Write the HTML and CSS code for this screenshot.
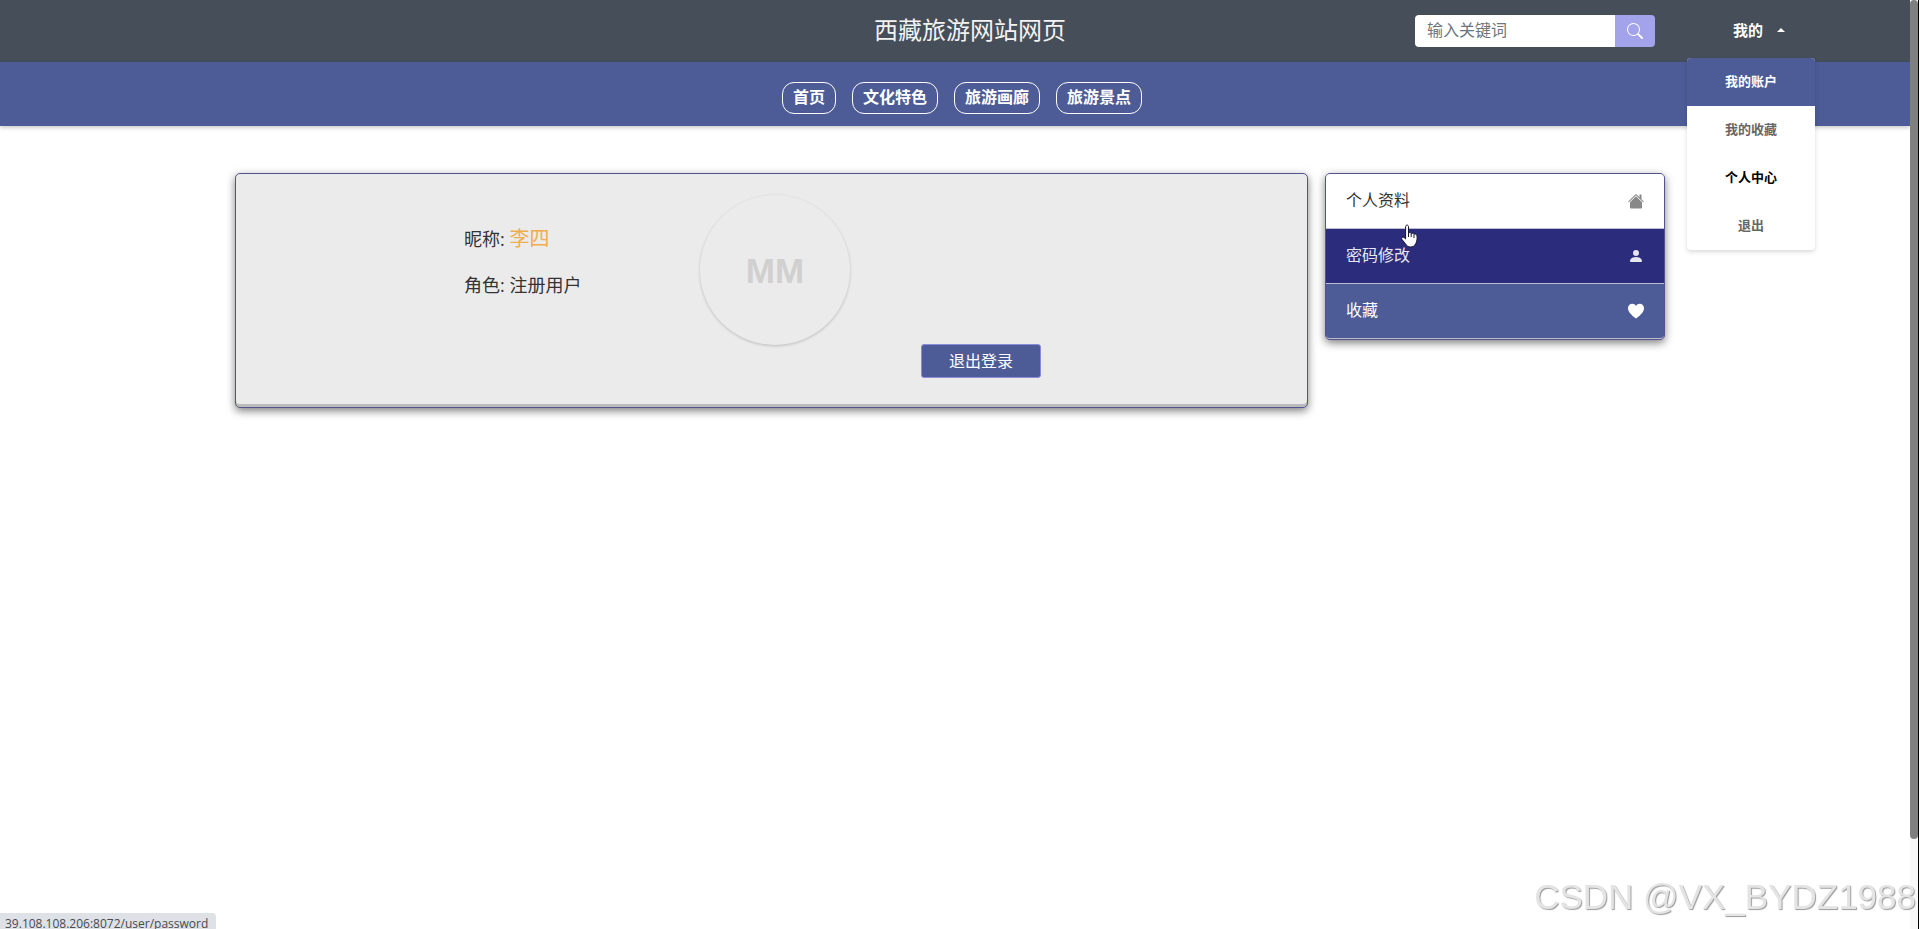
FILE: index.html
```html
<!DOCTYPE html>
<html lang="zh-CN">
<head>
  <meta charset="UTF-8" />
  <meta name="viewport" content="width=device-width, initial-scale=1.0"/>
  <title>西藏旅游网站网页</title>
  <link rel="stylesheet" href="styles.css">
</head>
<body>
  <header class="top">
    <h1 class="title">西藏旅游网站网页</h1>
    <div class="tools">
      <form class="search">
        <input type="text" placeholder="输入关键词" aria-label="输入关键词">
        <button type="button" aria-label="搜索">
          <svg width="16" height="16" viewBox="0 0 16 16" fill="currentColor"><path d="M11.742 10.344a6.5 6.5 0 1 0-1.397 1.398h-.001q.044.06.098.115l3.85 3.85a1 1 0 0 0 1.415-1.414l-3.85-3.85a1 1 0 0 0-.115-.1zM12 6.5a5.5 5.5 0 1 1-11 0 5.5 5.5 0 0 1 11 0"/></svg>
        </button>
      </form>
      <div class="user">
        <button type="button" class="user-toggle">我的 <span class="caret"></span></button>
        <div class="menu">
          <a href="#" class="active">我的账户</a>
          <a href="#">我的收藏</a>
          <a href="#" class="current">个人中心</a>
          <a href="#">退出</a>
        </div>
      </div>
    </div>
  </header>

  <nav class="nav">
    <a href="#">首页</a>
    <a href="#">文化特色</a>
    <a href="#">旅游画廊</a>
    <a href="#">旅游景点</a>
  </nav>

  <main class="content">
    <section class="card">
      <div class="info">
        <p>昵称: <span class="nickname">李四</span></p>
        <p>角色: <span>注册用户</span></p>
      </div>
      <div class="avatar">MM</div>
      <button type="button" class="logout">退出登录</button>
    </section>

    <aside class="side">
      <a href="#" class="side-profile">
        <span>个人资料</span>
        <svg width="16" height="16" viewBox="0 0 16 16" fill="currentColor"><path d="M8 3.300l6 6V14.500a1 1 0 0 1-1 1H3a1 1 0 0 1-1-1V9.300z"/><path d="M7.300 1.500a1 1 0 0 1 1.400 0L11.500 4.300V1.500h2v4.800l2.300 2.300-.7.700L8 2.200.9 9.300l-.7-.7z"/></svg>
      </a>
      <a href="#" class="side-password">
        <span>密码修改</span>
        <svg width="16" height="16" viewBox="0 0 16 16" fill="currentColor"><path d="M3 14s-1 0-1-1 1-4 6-4 6 3 6 4-1 1-1 1zm5-6a3 3 0 1 0 0-6 3 3 0 0 0 0 6"/></svg>
        <svg class="pointer" width="18" height="25" viewBox="0 0 18 25"><path d="M5 1.500C6 .6 7.500 1.200 7.500 2.700V9c.8-.8 2.200-.5 2.700.6.900-.7 2.300-.4 2.700.8 1-.7 2.900-.2 3.100 1.400.4 3-.1 5.600-1.200 7.700-1.300 2.600-3 3.500-5.300 3.500-2.500 0-4-1.400-5.200-3.400L1 15.500c-1-1.700.5-3.200 2-2.100l1.600 1.500V2.600z" fill="#fff" stroke="#16162e"/><path d="M7.500 9v4M10.200 10v3M13 11v3" stroke="#16162e"/></svg>
      </a>
      <a href="#" class="side-favorite">
        <span>收藏</span>
        <svg width="16" height="16" viewBox="0 0 16 16" fill="currentColor"><path d="M8 15.500C5.500 13.800 0 9.700 0 5.300 0 2.500 2 .8 4.200.8 5.900.8 7.200 1.700 8 3 8.800 1.700 10.100.8 11.800.8 14 .8 16 2.500 16 5.300c0 4.400-5.500 8.500-8 10.200z"/></svg>
      </a>
    </aside>
  </main>

  <div class="status">39.108.108.206:8072/user/password</div>
  <div class="scrollbar"><div class="thumb"></div></div>
  <div class="watermark">CSDN @VX_BYDZ1988</div>
</body>
</html>
```

FILE: styles.css
```css
* {
  margin: 0;
  padding: 0;
  box-sizing: border-box;
}
html, body {
  height: 100%;
  overflow: hidden;
}
body {
  padding-right: 9px;
  background: #fff;
  color: #333;
  font-family: "Open Sans", "Noto Sans CJK SC", sans-serif;
  font-size: 16px;
  line-height: 24px;
}
a {
  color: inherit;
  text-decoration: none;
}
button, input {
  font: inherit;
  border: none;
}
button {
  cursor: pointer;
}

.top {
  display: grid;
  grid-template-columns: 1fr auto 1fr;
  align-items: center;
  height: 62px;
  padding: 0 95px 0 125px;
  background: #454e59;
  color: #fff;
}
.title {
  grid-column: 2;
  padding-bottom: 2px;
  font-size: 24px;
  font-weight: 400;
  line-height: 32px;
  color: #f2f2f2;
}
.tools {
  display: flex;
  justify-content: flex-end;
  align-items: center;
  gap: 32px;
}
.search {
  display: flex;
  width: 240px;
  height: 32px;
  border-radius: 4px;
  overflow: hidden;
}
.search input {
  flex: 1;
  min-width: 0;
  padding: 0 12px 2px;
  background: #fff;
}
.search input::placeholder {
  color: #6c757d;
}
.search button {
  display: flex;
  align-items: center;
  justify-content: center;
  width: 40px;
  background: #a3a3eb;
  color: #fff;
}

.user {
  position: relative;
  width: 128px;
}
.user-toggle {
  display: flex;
  align-items: center;
  justify-content: space-between;
  width: 100%;
  padding: 0 30px 2px 46px;
  background: none;
  color: #fff;
  font-size: 15px;
  font-weight: 700;
}
.caret {
  border: 4px solid transparent;
  border-top: 0;
  border-bottom-color: #fff;
}
.menu {
  position: absolute;
  top: 40px;
  left: 0;
  z-index: 10;
  width: 100%;
  background: #fff;
  border-radius: 4px;
  box-shadow: 0 2px 4px rgba(0,0,0,0.15);
  overflow: hidden;
}
.menu a {
  display: block;
  padding-bottom: 2px;
  color: #666;
  font-size: 13px;
  font-weight: 700;
  line-height: 46px;
  text-align: center;
}
.menu .active {
  background: #4d5c97;
  color: #fff;
}
.menu .current {
  color: #000;
}

.nav {
  display: flex;
  align-items: center;
  justify-content: center;
  gap: 16px;
  height: 64px;
  padding: 8px 0 0 14px;
  background: #4d5c97;
  box-shadow: 0 2px 4px rgba(0,0,0,0.2);
}
.nav a {
  padding: 2px 10px 4px;
  border: 1px solid #fff;
  border-radius: 12px;
  color: #fff;
  font-weight: 700;
}

.content {
  display: flex;
  align-items: flex-start;
  gap: 17px;
  padding: 47px 245px 0 235px;
}
.card, .side {
  border: 1px solid #53538d;
  border-radius: 5px;
  box-shadow: 0 3px 8px rgba(0,0,0,0.5);
}
.card {
  display: flex;
  flex: 1;
  height: 235px;
  padding: 21px 0 29px 228px;
  background: #ebebeb;
  box-shadow: inset 0 -3px 0 #bbb, 0 3px 8px rgba(0,0,0,0.5);
}
.info {
  width: 236px;
  padding-top: 32px;
  font-size: 18px;
}
.info p {
  margin-bottom: 22px;
}
.nickname {
  color: #f0ad4e;
  font-size: 20px;
}
.avatar {
  width: 150px;
  height: 150px;
  border-radius: 50%;
  box-shadow: 0 1px 3px rgba(0,0,0,0.2);
  color: #d0d0d0;
  font-family: "Liberation Sans", Arial, sans-serif;
  font-size: 35px;
  font-weight: 700;
  line-height: 152px;
  text-align: center;
}
.logout {
  align-self: flex-end;
  width: 120px;
  height: 34px;
  margin-left: 71px;
  border: 1px solid #8b8bdc;
  border-radius: 3px;
  background: #4d5c97;
  color: #fff;
}

.side {
  width: 340px;
  background: #4d5c97;
}
.side a {
  display: flex;
  align-items: center;
  justify-content: space-between;
  position: relative;
  height: 55px;
  padding: 0 20px;
  border-bottom: 1px solid #bdbdcf;
  color: #fff;
}
.side span {
  padding-bottom: 2px;
}
.side .side-profile {
  border-radius: 4px 4px 0 0;
  background: #fff;
  color: #333;
}
.side-profile svg {
  color: #888;
}
.side .side-password {
  background: #2c2c7c;
  color: #e6e6f2;
}
.side .side-favorite {
  border-radius: 0 0 4px 4px;
}
.pointer {
  position: absolute;
  top: -5px;
  left: 75px;
  fill: none;
}

.status {
  position: fixed;
  left: 0;
  bottom: -6px;
  height: 22px;
  padding: 0 8px 0 5px;
  border-radius: 0 4px 0 0;
  background: #dee1e6;
  color: #484b50;
  font-size: 12px;
  line-height: 22px;
}
.scrollbar {
  position: fixed;
  top: 0;
  right: 0;
  width: 9px;
  height: 100%;
  border-right: 1px solid #000;
  background: #f8f8f8;
}
.thumb {
  height: 839px;
  border-radius: 4px;
  background: #808080;
}
.watermark {
  position: fixed;
  right: 3px;
  bottom: 6px;
  color: #e4e4e4;
  font-family: "Liberation Sans", Arial, sans-serif;
  font-size: 35px;
  line-height: 52px;
  text-shadow: 1px 1px 1px #999;
}
```
